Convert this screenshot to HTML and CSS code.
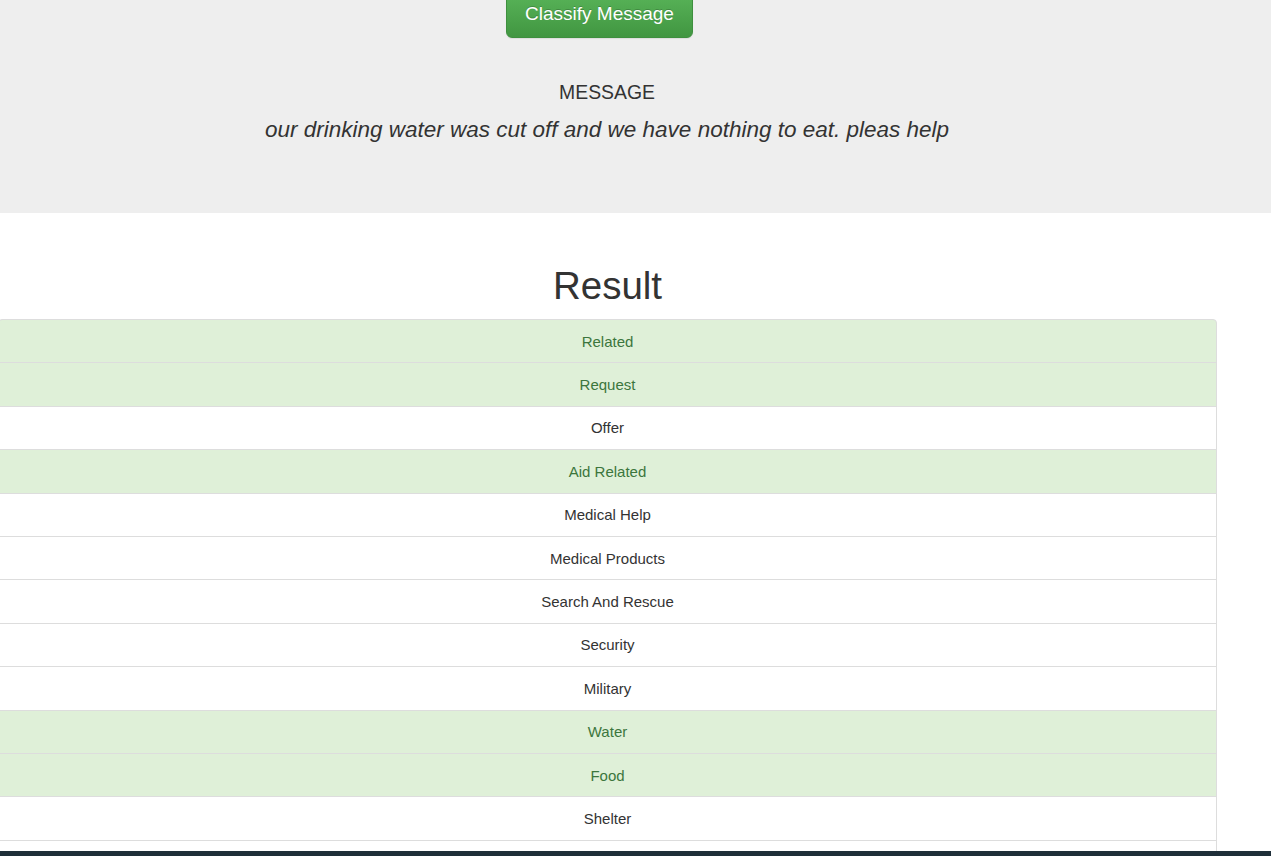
FILE: index.html
```html
<!DOCTYPE html>
<html lang="en">
<head>
<meta charset="utf-8">
<title>Disaster Response</title>
<link rel="stylesheet" href="styles.css">
</head>
<body>
<div class="jumbotron">
  <div class="form-row">
    <button class="btn-classify" type="button">Classify Message</button>
  </div>
  <div class="message-block">
    <h4 class="message-label">MESSAGE</h4>
    <p class="message-text">our drinking water was cut off and we have nothing to eat. pleas help</p>
  </div>
</div>
<div class="results">
  <h1 class="results-title">Result</h1>
  <ul class="list-group">
    <li class="list-item success">Related</li>
    <li class="list-item success">Request</li>
    <li class="list-item">Offer</li>
    <li class="list-item success">Aid Related</li>
    <li class="list-item">Medical Help</li>
    <li class="list-item">Medical Products</li>
    <li class="list-item">Search And Rescue</li>
    <li class="list-item">Security</li>
    <li class="list-item">Military</li>
    <li class="list-item success">Water</li>
    <li class="list-item success">Food</li>
    <li class="list-item">Shelter</li>
    <li class="list-item">Clothing</li>
  </ul>
</div>
<div class="bottom-bar"></div>
</body>
</html>
```

FILE: styles.css
```css
html, body {
  margin: 0;
  padding: 0;
}
body {
  font-family: "Liberation Sans", Arial, sans-serif;
  color: #333;
  background: #fff;
  font-size: 15px;
  line-height: 1.428571;
  overflow: hidden;
}
.jumbotron {
  background: #eee;
  margin-top: -14px;
  height: 227px;
  display: flex;
  flex-direction: column;
}
.form-row {
  display: flex;
  justify-content: flex-start;
  padding-left: 506px;
}
.btn-classify {
  font-family: "Liberation Sans", Arial, sans-serif;
  font-size: 19px;
  line-height: 25px;
  padding: 14px 17px 11px 17px;
  width: 187px;
  color: #fff;
  border: 1px solid #3e8f3e;
  border-radius: 6px;
  background: linear-gradient(to bottom, #5cb85c 0%, #419641 100%);
  text-shadow: 0 -1px 0 rgba(0,0,0,.2);
  box-shadow: inset 0 1px 0 rgba(255,255,255,.15), 0 1px 1px rgba(0,0,0,.075);
}
.message-block {
  text-align: center;
  margin-right: 57px;
  margin-top: 42px;
}
.message-label {
  margin: 0;
  font-size: 19.4px;
  font-weight: 400;
  line-height: 24px;
  color: #333;
}
.message-text {
  margin: 12px 0 0 0;
  font-size: 22.5px;
  font-style: italic;
  line-height: 28px;
  color: #333;
}
.results {
  width: 1219px;
  margin-left: -2px;
}
.results-title {
  text-align: center;
  font-size: 38.5px;
  font-weight: 400;
  line-height: 44px;
  margin: 51px 0 11px 0;
  color: #333;
}
.list-group {
  list-style: none;
  margin: 0;
  padding: 0;
}
.list-item {
  text-align: center;
  padding: 10.5px 15px;
  line-height: 21.4px;
  border: 1px solid #ddd;
  margin-bottom: -1px;
  background: #fff;
  color: #333;
}
.list-item:first-child {
  border-top-left-radius: 4px;
  border-top-right-radius: 4px;
}
.list-item.success {
  background: #dff0d8;
  color: #3c763d;
}
.bottom-bar {
  position: fixed;
  left: 0;
  right: 0;
  bottom: 0;
  height: 5px;
  background: #1f2f39;
}
```
